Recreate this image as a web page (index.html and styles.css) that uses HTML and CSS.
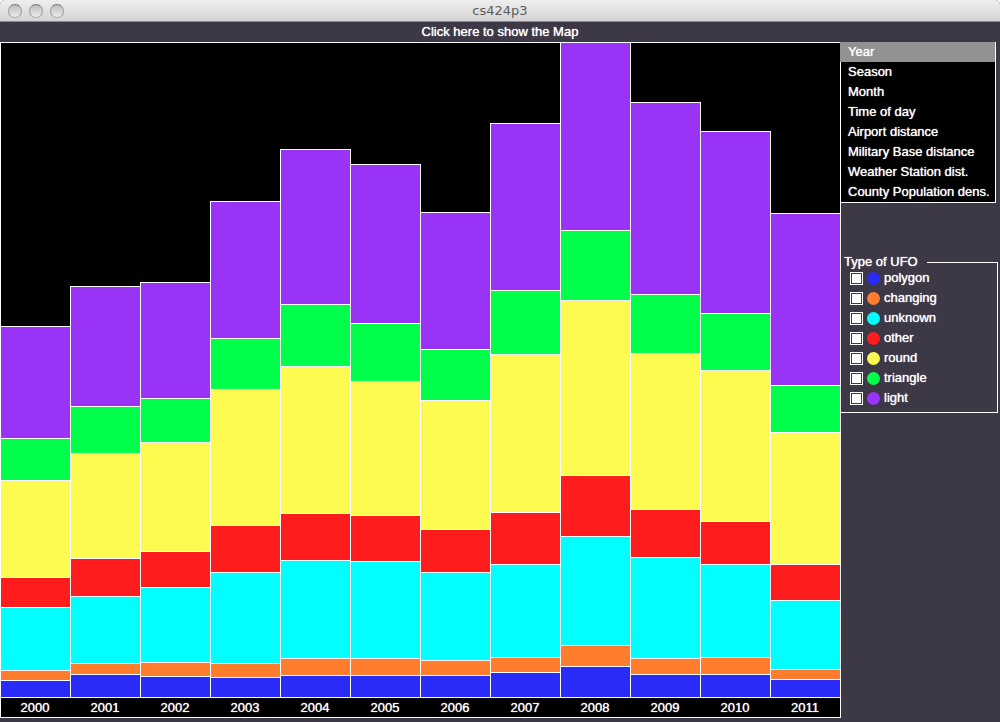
FILE: index.html
```html
<!DOCTYPE html>
<html lang="en">
<head>
<meta charset="utf-8">
<title>cs424p3</title>
<link rel="stylesheet" href="styles.css">
</head>
<body class="window">
  <header class="titlebar">
    <div class="controls">
      <button class="control" type="button" aria-label="Close"></button>
      <button class="control" type="button" aria-label="Minimize"></button>
      <button class="control" type="button" aria-label="Zoom"></button>
    </div>
    <h1 class="title">cs424p3</h1>
  </header>
  <button class="map-toggle" type="button">Click here to show the Map</button>
  <main class="content">
    <section class="chart" aria-label="Sightings by year">
      <div class="plot" id="plot"></div>
      <div class="axis" id="axis"></div>
    </section>
    <aside class="side">
      <nav class="menu" aria-label="Group by">
        <button class="menu-item selected" type="button">Year</button>
        <button class="menu-item" type="button">Season</button>
        <button class="menu-item" type="button">Month</button>
        <button class="menu-item" type="button">Time of day</button>
        <button class="menu-item" type="button">Airport distance</button>
        <button class="menu-item" type="button">Military Base distance</button>
        <button class="menu-item" type="button">Weather Station dist.</button>
        <button class="menu-item" type="button">County Population dens.</button>
      </nav>
      <fieldset class="types">
        <legend class="types-title">Type of UFO</legend>
        <label class="type"><input class="check" type="checkbox" checked><span class="dot polygon"></span>polygon</label>
        <label class="type"><input class="check" type="checkbox" checked><span class="dot changing"></span>changing</label>
        <label class="type"><input class="check" type="checkbox" checked><span class="dot unknown"></span>unknown</label>
        <label class="type"><input class="check" type="checkbox" checked><span class="dot other"></span>other</label>
        <label class="type"><input class="check" type="checkbox" checked><span class="dot round"></span>round</label>
        <label class="type"><input class="check" type="checkbox" checked><span class="dot triangle"></span>triangle</label>
        <label class="type"><input class="check" type="checkbox" checked><span class="dot light"></span>light</label>
      </fieldset>
    </aside>
  </main>
  <script src="chart.js"></script>
</body>
</html>
```
FILE: styles.css
```css
* {
  box-sizing: border-box;
}

.window {
  margin: 0;
  min-height: 100vh;
  display: flex;
  flex-direction: column;
  background: #3d3846;
  color: #fff;
  font: 13px/20px "Liberation Sans", Arial, sans-serif;
  text-shadow: 0 0 1px #fff;
}

button {
  margin: 0;
  padding: 0;
  border: 0;
  background: none;
  color: inherit;
  font: inherit;
  text-shadow: inherit;
}

.titlebar {
  display: grid;
  grid-template-columns: 1fr auto 1fr;
  align-items: center;
  height: 22px;
  border-bottom: 1px solid #8a8a8a;
  border-radius: 5px 5px 0 0;
  background: linear-gradient(#eeeeee, #d4d4d4);
  box-shadow: 0 -5px 0 5px #fff;
  clip-path: inset(0);
  text-shadow: none;
}

.controls {
  display: flex;
  gap: 7px;
  padding-left: 8px;
}

.control {
  width: 14px;
  height: 14px;
  border: 1px solid #9a9a9a;
  border-top-color: #7c7c7c;
  border-bottom-color: #adadad;
  border-radius: 50%;
  background: linear-gradient(#bcbcbc, #cfcfcf 40%, #ececec);
}

.title {
  margin: 0;
  color: #5c5c5c;
  font: 13px/20px "DejaVu Sans", sans-serif;
}

.map-toggle {
  height: 20px;
}

.content {
  flex: 1;
  display: flex;
  padding-bottom: 4px;
}

.chart {
  flex: 1;
  display: flex;
  flex-direction: column;
  margin-right: -1px;
  background: #000;
  box-shadow: inset 0 0 0 1px #fff;
}

.plot {
  flex: 1;
  display: flex;
  padding-right: 1px;
}

.bar {
  flex: 1;
  display: flex;
  flex-direction: column-reverse;
  margin-right: -1px;
}

.segment {
  flex-basis: 0;
  box-shadow: inset 1px 1px 0 #fff, inset -1px 0 0 #fff;
}

.axis {
  display: flex;
  border-top: 1px solid #fff;
  padding-right: 1px;
}

.tick {
  flex: 1;
  text-align: center;
}

.side {
  width: 160px;
}

.menu {
  display: flex;
  flex-direction: column;
  margin-right: 4px;
  border: solid #fff;
  border-width: 0 1px 1px;
  background: #000;
}

.menu-item {
  padding-left: 7px;
  text-align: left;
  white-space: nowrap;
}

.menu-item.selected {
  margin-left: -1px;
  padding-left: 8px;
  background: #929292;
}

.types {
  margin: 53px 2px 0 0;
  padding: 0 0 4px 9px;
  border: 1px solid #fff;
}

.types-title {
  margin-left: -9px;
  padding: 0 9px 0 3px;
  line-height: 12px;
}

.type {
  display: flex;
  align-items: center;
}

.check {
  appearance: none;
  width: 13px;
  height: 13px;
  margin: 0 4px 0 0;
  padding: 1px;
  border: 1px solid #fff;
}

.check:checked {
  background: #fff content-box;
}

.dot {
  width: 13px;
  height: 13px;
  margin-right: 4px;
  border-radius: 50%;
}

.polygon {
  background: #2b2bf8;
}

.changing {
  background: #ff7d2d;
}

.unknown {
  background: #00ffff;
}

.other {
  background: #ff1c1c;
}

.round {
  background: #fdfb50;
}

.triangle {
  background: #00ff4a;
}

.light {
  background: #9933f5;
}
```
FILE: chart.js
```js
const types = ["polygon", "changing", "unknown", "other", "round", "triangle", "light"];

const years = {
  2000: [17, 10, 63, 30, 97, 42, 112],
  2001: [23, 11, 67, 38, 105, 47, 120],
  2002: [21, 14, 75, 36, 109, 44, 116],
  2003: [20, 14, 91, 47, 136, 51, 137],
  2004: [22, 17, 98, 47, 147, 62, 155],
  2005: [22, 17, 97, 46, 134, 58, 159],
  2006: [22, 15, 88, 43, 129, 51, 137],
  2007: [25, 15, 93, 52, 158, 64, 167],
  2008: [31, 21, 109, 61, 175, 70, 188],
  2009: [23, 16, 101, 48, 156, 59, 192],
  2010: [23, 17, 93, 43, 151, 57, 182],
  2011: [18, 10, 69, 36, 132, 47, 172]
};

const sum = (values) => values.reduce((a, b) => a + b, 0);
const highest = Math.max(...Object.values(years).map(sum));
const plot = document.getElementById("plot");
const axis = document.getElementById("axis");

for (const [year, values] of Object.entries(years)) {
  const bar = document.createElement("div");
  bar.className = "bar";
  values.forEach((value, i) => {
    const segment = document.createElement("div");
    segment.className = "segment " + types[i];
    segment.style.flexGrow = value;
    bar.append(segment);
  });
  // The empty part above the bar keeps every column on the same scale.
  const rest = document.createElement("div");
  rest.style.flexGrow = highest - sum(values);
  bar.append(rest);
  plot.append(bar);

  const tick = document.createElement("span");
  tick.className = "tick";
  tick.textContent = year;
  axis.append(tick);
}
```
